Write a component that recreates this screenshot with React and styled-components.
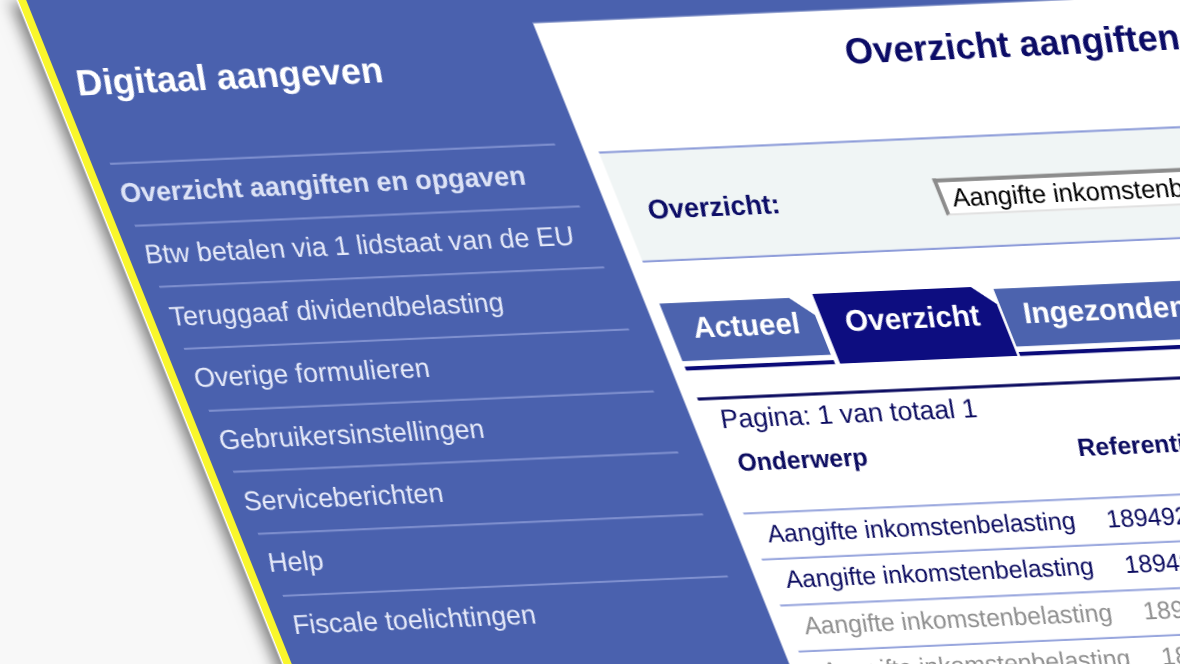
import React from "react";
import styled, { createGlobalStyle, css } from "styled-components";

const Global = createGlobalStyle`
  html, body { margin: 0; padding: 0; background: #f8f8f8; }
  body { font-family: "Liberation Sans", Arial, sans-serif; }
`;

const upright = css`
  display: inline-block;
  transform: skewX(-13deg);
  transform-origin: left bottom;
`;

const Viewport = styled.div`
  width: 1180px;
  height: 664px;
  overflow: hidden;
  background: #f8f8f8;
`;

const Sheet = styled.div`
  display: flex;
  box-sizing: border-box;
  width: 1800px;
  height: 900px;
  background: #4a61ae;
  border-left: 8px solid #f9f62c;
  box-shadow: -1.5px 0 0 #fff, -8px 3px 14px rgba(0, 0, 0, 0.5);
  transform: matrix(1, -0.0438, 0.4, 1, 18, 0);
  transform-origin: 0 0;
  filter: blur(0.35px);
`;

const Sidebar = styled.aside`
  flex: 0 0 489px;
  padding-top: 65px;
`;

const BrandTitle = styled.h1`
  margin: 0 0 59px;
  padding-left: 12px;
  font-size: 36px;
  line-height: 40px;
  font-weight: 700;
  color: #fff;
  span { ${upright} }
`;

const NavList = styled.ul`
  list-style: none;
  margin: 0 0 0 18px;
  padding: 0;
  width: 445px;
`;

const NavItem = styled.li`
  box-sizing: border-box;
  display: flex;
  align-items: center;
  height: 61.7px;
  border-top: 2px solid #7f90cf;
`;

const NavLabel = styled.span`
  ${upright}
  margin: -3px 0 0 -5.5px;
  font-size: 26.8px;
  line-height: 30px;
  white-space: nowrap;
  font-weight: ${(p) => (p.$current ? 700 : 400)};
  color: ${(p) => (p.$current ? "#dde3f6" : "#e6eaf9")};
`;

const Card = styled.main`
  flex: 1;
  margin-top: 44px;
  padding: 21px 0 0 13.5px;
  background: #fff;
  border-top: 1px solid #2f4aa3;
  box-sizing: border-box;
  min-width: 0;
`;

const PageHeading = styled.h2`
  margin: 0 0 68px 277px;
  font-size: 36px;
  line-height: 40px;
  font-weight: 700;
  color: #0c0c66;
  white-space: nowrap;
  span { ${upright} }
`;

const FilterBar = styled.div`
  box-sizing: border-box;
  display: flex;
  align-items: flex-start;
  height: 111px;
  padding: 39px 0 0 22px;
  background: #f0f5f5;
  border-top: 2px solid #8d9bd9;
  border-bottom: 2px solid #8d9bd9;
`;

const FilterLabel = styled.label`
  flex: 0 0 295.5px;
  padding-top: 3px;
  font-size: 27px;
  line-height: 30px;
  font-weight: 700;
  color: #0c0c66;
  span { ${upright} }
`;

const SelectBox = styled.div`
  box-sizing: border-box;
  width: 600px;
  height: 37px;
  padding-left: 5px;
  background: #fff;
  border-top: 4px solid #8c8c8c;
  border-left: 4px solid #8c8c8c;
  border-bottom: 2px solid #e0e0e0;
  font-size: 25.5px;
  line-height: 30px;
  color: #000;
  white-space: nowrap;
  span { ${upright} }
`;

const Tabs = styled.nav`
  display: flex;
  align-items: flex-start;
  height: 70px;
  margin-top: 38px;
`;

const Tab = styled.div`
  flex: 0 0 ${(p) => p.$width}px;
  margin-right: ${(p) => p.$gap}px;
  box-sizing: border-box;
  ${(p) =>
    !p.$active &&
    css`
      margin-top: 3px;
      height: 67px;
      border-bottom: 4px solid #0a0a78;
    `}
`;

const TabFace = styled.div`
  box-sizing: border-box;
  height: ${(p) => (p.$active ? 70 : 58)}px;
  padding: ${(p) => (p.$active ? 11 : 8)}px 0 0 ${(p) => p.$inset}px;
  background: ${(p) => (p.$active ? "#0d0d80" : "#4c63ae")};
  color: #fff;
  font-size: 29.5px;
  line-height: 33px;
  font-weight: 700;
  white-space: nowrap;
  clip-path: polygon(0 0, calc(100% - 19px) 0, 100% 18px, 100% 100%, 0 100%);
  span { ${upright} }
`;

const TabsRule = styled.hr`
  margin: 27px 0 0;
  height: 3px;
  border: 0;
  background: #0c0c60;
`;

const Pager = styled.p`
  margin: 5px 0 14px 11px;
  font-size: 26.5px;
  line-height: 29.6px;
  color: #0c0c60;
  span { ${upright} }
`;

const HeaderRow = styled.div`
  display: grid;
  grid-template-columns: 340px 1fr;
  height: 28px;
  margin: 0 0 35px 11px;
  font-size: 24.6px;
  line-height: 28px;
  font-weight: 700;
  color: #0c0c60;
  span { ${upright} }
`;

const DataRow = styled.div`
  box-sizing: border-box;
  display: grid;
  grid-template-columns: 339px 1fr;
  height: 46px;
  padding: 6px 0 0 10px;
  border-top: 2px solid #98a6dd;
  font-size: 24.6px;
  line-height: 28px;
  white-space: nowrap;
  color: ${(p) => (p.$muted ? "#8f8f8f" : "#0c0c60")};
  span { ${upright} }
`;

const menu = [
  "Overzicht aangiften en opgaven",
  "Btw betalen via 1 lidstaat van de EU",
  "Teruggaaf dividendbelasting",
  "Overige formulieren",
  "Gebruikersinstellingen",
  "Serviceberichten",
  "Help",
  "Fiscale toelichtingen",
];

const tabs = [
  { label: "Actueel", width: 149, gap: 5, inset: 20 },
  { label: "Overzicht", width: 178, gap: 2, inset: 18, active: true },
  { label: "Ingezonden", width: 600, gap: 0, inset: 16 },
];

const rows = [
  { ref: "189492745", muted: false },
  { ref: "189492746", muted: false },
  { ref: "189492747", muted: true },
  { ref: "189492748", muted: true },
];

export default function App() {
  return (
    <Viewport>
      <Global />
      <Sheet>
        <Sidebar>
          <BrandTitle><span>Digitaal aangeven</span></BrandTitle>
          <NavList>
            {menu.map((m, i) => (
              <NavItem key={m}>
                <NavLabel $current={i === 0}>{m}</NavLabel>
              </NavItem>
            ))}
          </NavList>
        </Sidebar>
        <Card>
          <PageHeading><span>Overzicht aangiften en opgaven</span></PageHeading>
          <FilterBar>
            <FilterLabel><span>Overzicht:</span></FilterLabel>
            <SelectBox><span>Aangifte inkomstenbelasting</span></SelectBox>
          </FilterBar>
          <Tabs>
            {tabs.map((t) => (
              <Tab key={t.label} $width={t.width} $gap={t.gap} $active={t.active}>
                <TabFace $active={t.active} $inset={t.inset}><span>{t.label}</span></TabFace>
              </Tab>
            ))}
          </Tabs>
          <TabsRule />
          <Pager><span>Pagina: 1 van totaal 1</span></Pager>
          <HeaderRow>
            <span>Onderwerp</span>
            <span>Referentie</span>
          </HeaderRow>
          {rows.map((r) => (
            <DataRow key={r.ref} $muted={r.muted}>
              <span>Aangifte inkomstenbelasting</span>
              <span>{r.ref}</span>
            </DataRow>
          ))}
        </Card>
      </Sheet>
    </Viewport>
  );
}
